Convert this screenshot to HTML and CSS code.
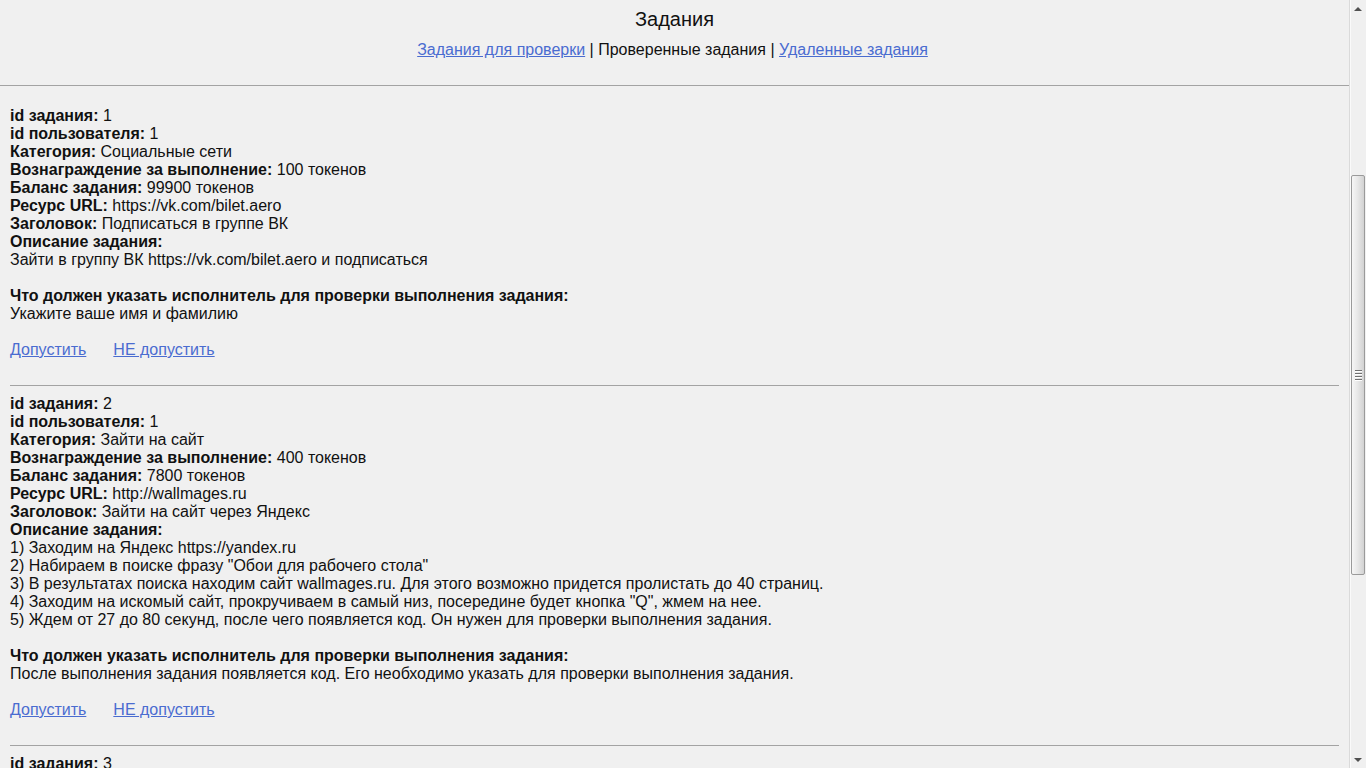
FILE: index.html
```html
<!DOCTYPE html>
<html lang="ru">
<head>
    <meta charset="UTF-8">
    <meta name="viewport" content="width=device-width, initial-scale=1.0">
    <title>Задания</title>
    <link rel="stylesheet" href="styles.css">
</head>
<body>
    <div class="window">
        <div class="page">
            <header class="top">
                <h1>Задания</h1>
                <nav class="tabs"><a href="#">Задания для проверки</a> | Проверенные задания | <a href="#">Удаленные задания</a></nav>
            </header>

            <main class="tasks">
                <div class="task">
                    <div><b>id задания:</b> 1</div>
                    <div><b>id пользователя:</b> 1</div>
                    <div><b>Категория:</b> Социальные сети</div>
                    <div><b>Вознаграждение за выполнение:</b> 100 токенов</div>
                    <div><b>Баланс задания:</b> 99900 токенов</div>
                    <div><b>Ресурс URL:</b> https://vk.com/bilet.aero</div>
                    <div><b>Заголовок:</b> Подписаться в группе ВК</div>
                    <div><b>Описание задания:</b></div>
                    <div>Зайти в группу ВК https://vk.com/bilet.aero и подписаться</div>
                    <div class="check">
                        <b>Что должен указать исполнитель для проверки выполнения задания:</b><br>
                        Укажите ваше имя и фамилию
                    </div>
                    <div class="actions">
                        <a href="#">Допустить</a>
                        <a href="#">НЕ допустить</a>
                    </div>
                </div>

                <div class="task">
                    <div><b>id задания:</b> 2</div>
                    <div><b>id пользователя:</b> 1</div>
                    <div><b>Категория:</b> Зайти на сайт</div>
                    <div><b>Вознаграждение за выполнение:</b> 400 токенов</div>
                    <div><b>Баланс задания:</b> 7800 токенов</div>
                    <div><b>Ресурс URL:</b> http://wallmages.ru</div>
                    <div><b>Заголовок:</b> Зайти на сайт через Яндекс</div>
                    <div><b>Описание задания:</b></div>
                    <div>1) Заходим на Яндекс https://yandex.ru</div>
                    <div>2) Набираем в поиске фразу "Обои для рабочего стола"</div>
                    <div>3) В результатах поиска находим сайт wallmages.ru. Для этого возможно придется пролистать до 40 страниц.</div>
                    <div>4) Заходим на искомый сайт, прокручиваем в самый низ, посередине будет кнопка "Q", жмем на нее.</div>
                    <div>5) Ждем от 27 до 80 секунд, после чего появляется код. Он нужен для проверки выполнения задания.</div>
                    <div class="check">
                        <b>Что должен указать исполнитель для проверки выполнения задания:</b><br>
                        После выполнения задания появляется код. Его необходимо указать для проверки выполнения задания.
                    </div>
                    <div class="actions">
                        <a href="#">Допустить</a>
                        <a href="#">НЕ допустить</a>
                    </div>
                </div>

                <div class="task">
                    <div><b>id задания:</b> 3</div>
                    <div><b>id пользователя:</b> 1</div>
                    <div><b>Категория:</b> Социальные сети</div>
                    <div><b>Вознаграждение за выполнение:</b> 50 токенов</div>
                    <div><b>Баланс задания:</b> 5000 токенов</div>
                </div>
            </main>
        </div>

        <!-- scrollbar of the window as it looks in the screenshot -->
        <div class="scrollbar" aria-hidden="true">
            <div class="sb-btn"><span class="arrow-up"></span></div>
            <div class="sb-track">
                <div class="sb-thumb">
                    <span></span><span></span><span></span><span></span>
                </div>
            </div>
            <div class="sb-btn"><span class="arrow-down"></span></div>
        </div>
    </div>
</body>
</html>
```

FILE: styles.css
```css
html, body {
    margin: 0;
    height: 100%;
}
body {
    background-color: #f0f0f0;
    font-family: "Liberation Sans", Arial, sans-serif;
    font-size: 16px;
    line-height: 18px;
    color: #111;
    overflow: hidden;
}
a {
    color: #4a6cd0;
}
.window {
    display: flex;
    height: 100vh;
}
.page {
    flex: 1;
    overflow: hidden;
}
.top {
    text-align: center;
    padding-bottom: 26px;
    border-bottom: 1px solid #a3a3a3;
}
.top h1 {
    margin: 0;
    padding-top: 8px;
    font-size: 20px;
    line-height: 23px;
    font-weight: normal;
}
.tabs {
    margin-top: 10px;
    padding-right: 4px;
}
.tasks {
    padding: 21px 10px 0;
}
.task {
    padding-bottom: 26px;
    margin-bottom: 9px;
    border-bottom: 1px solid #a3a3a3;
}
.check {
    margin-top: 18px;
}
.actions {
    margin-top: 18px;
    display: flex;
    gap: 27px;
}

/* scrollbar */
.scrollbar {
    width: 16px;
    display: flex;
    flex-direction: column;
    border-left: 1px solid #dadada;
    box-shadow: inset 1px 0 0 #fafafa;
    background-color: #f0f0f0;
}
.sb-btn {
    height: 17px;
    display: flex;
    justify-content: center;
    align-items: center;
}
.arrow-up, .arrow-down {
    width: 0;
    height: 0;
    border-left: 4px solid transparent;
    border-right: 4px solid transparent;
}
.arrow-up {
    border-bottom: 4px solid #505050;
}
.arrow-down {
    border-top: 4px solid #505050;
}
.sb-track {
    flex: 1;
    padding-top: 158px;
}
.sb-thumb {
    height: 398px;
    margin: 0 1px 0 1px;
    border: 1px solid #9a9a9a;
    border-radius: 2px;
    background: linear-gradient(to right, #f6f6f6, #e6e6e6 50%, #d2d2d2);
    display: flex;
    flex-direction: column;
    justify-content: center;
    align-items: center;
    gap: 2px;
}
.sb-thumb span {
    width: 7px;
    height: 1px;
    background-color: #707070;
    box-shadow: 0 1px 0 #fff;
}
```
